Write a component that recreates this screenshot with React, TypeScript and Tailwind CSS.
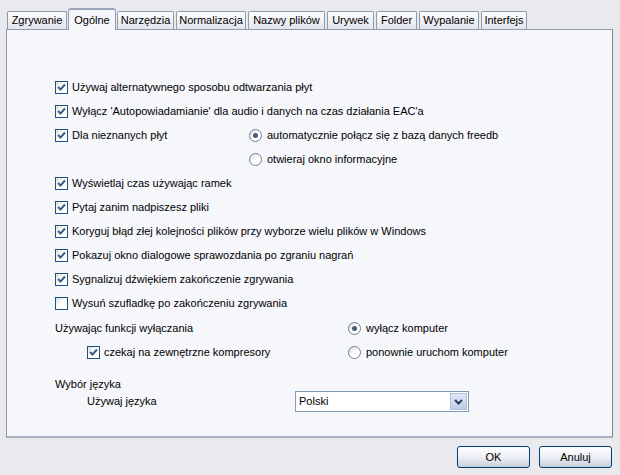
import React from 'react';

const tabs = [
  { label: 'Zgrywanie', w: 'w-[60px]' },
  { label: 'Ogólne', w: 'w-[48px]', active: true },
  { label: 'Narzędzia', w: 'w-[57px]' },
  { label: 'Normalizacja', w: 'w-[70px]' },
  { label: 'Nazwy plików', w: 'w-[77px]' },
  { label: 'Urywek', w: 'w-[47px]' },
  { label: 'Folder', w: 'w-[41px]' },
  { label: 'Wypalanie', w: 'w-[60px]' },
  { label: 'Interfejs', w: 'w-[46px]' },
];

const CheckBox = ({ checked }: { checked: boolean }) => (
  <span className="w-[13px] h-[13px] shrink-0 border border-[#1c5180] bg-gradient-to-br from-[#dcdcd7] via-white to-white flex items-center justify-center">
    {checked && (
      <svg width="9" height="9" viewBox="0 0 9 9">
        <path d="M1 4 L3.5 6.5 L8 1.5" stroke="#3d5a7e" strokeWidth="2" fill="none" />
      </svg>
    )}
  </span>
);

const Radio = ({ checked }: { checked: boolean }) => (
  <span className="w-[13px] h-[13px] shrink-0 rounded-full border border-[#6f7f96] bg-gradient-to-br from-[#d8d8de] via-white to-white flex items-center justify-center">
    {checked && <span className="w-[5px] h-[5px] rounded-full bg-[#4a5a78]" />}
  </span>
);

const Check = ({ label, checked = true }: { label: string; checked?: boolean }) => (
  <div className="flex items-center gap-[4px]">
    <CheckBox checked={checked} />
    <span>{label}</span>
  </div>
);

const Opt = ({ label, checked = false }: { label: string; checked?: boolean }) => (
  <div className="flex items-center gap-[5px]">
    <Radio checked={checked} />
    <span>{label}</span>
  </div>
);

const Row = ({ children }: { children: React.ReactNode }) => (
  <div className="h-6 flex items-center">{children}</div>
);

const Button = ({ label }: { label: string }) => (
  <button className="w-[73px] h-[22px] rounded-[3px] border border-[#003c74] bg-gradient-to-b from-white via-[#eef0f5] to-[#c6cfdc] text-black">
    {label}
  </button>
);

export default function App() {
  return (
    <div
      className="w-[620px] h-[475px] bg-[#eae9ee] text-[11px] text-black flex flex-col"
      style={{ fontFamily: '"Liberation Sans", Arial, sans-serif' }}
    >
      <div className="h-[29px] pl-[7px] flex items-end gap-[2px]">
        {tabs.map((t) =>
          t.active ? (
            <div
              key={t.label}
              className={`${t.w} -mx-[1px] h-[22px] -mb-px relative z-10 bg-[#f6f7fb] border border-b-0 border-[#8b9bb0] rounded-t-[3px] border-t-2 border-t-[#9aa6b8] flex items-center justify-center`}
            >
              {t.label}
            </div>
          ) : (
            <div
              key={t.label}
              className={`${t.w} h-[18px] bg-gradient-to-b from-white to-[#e3e4ec] border border-b-0 border-[#8b9bb0] rounded-t-[2px] flex items-center justify-center`}
            >
              {t.label}
            </div>
          )
        )}
      </div>

      <div className="ml-[6px] w-[607px] h-[409px] bg-[#f6f7fb] border border-[#8b9bb0] border-r-[#7a889c] border-b-2 border-b-[#a8b2c2] pl-[48px] pt-[45px] flex flex-col">
        <Row><Check label="Używaj alternatywnego sposobu odtwarzania płyt" /></Row>
        <Row><Check label="Wyłącz 'Autopowiadamianie' dla audio i danych na czas działania EAC'a" /></Row>
        <Row>
          <div className="w-[194px]"><Check label="Dla nieznanych płyt" /></div>
          <Opt label="automatycznie połącz się z bazą danych freedb" checked />
        </Row>
        <Row>
          <div className="w-[194px]" />
          <Opt label="otwieraj okno informacyjne" />
        </Row>
        <Row><Check label="Wyświetlaj czas używając ramek" /></Row>
        <Row><Check label="Pytaj zanim nadpiszesz pliki" /></Row>
        <Row><Check label="Koryguj błąd złej kolejności plików przy wyborze wielu plików w Windows" /></Row>
        <Row><Check label="Pokazuj okno dialogowe sprawozdania po zgraniu nagrań" /></Row>
        <Row><Check label="Sygnalizuj dźwiękiem zakończenie zgrywania" /></Row>
        <Row><Check label="Wysuń szufladkę po zakończeniu zgrywania" checked={false} /></Row>
        <div className="mt-px">
          <Row>
            <div className="w-[293px]">Używając funkcji wyłączania</div>
            <Opt label="wyłącz komputer" checked />
          </Row>
          <Row>
            <div className="w-[293px] pl-[32px]"><Check label="czekaj na zewnętrzne kompresory" /></div>
            <Opt label="ponownie uruchom komputer" />
          </Row>
        </div>
        <div className="mt-[13px] h-[14px] leading-[14px]">Wybór języka</div>
        <div className="h-[21px] flex items-center pl-[32px]">
          <div className="w-[208px]">Używaj języka</div>
          <div className="w-[174px] h-[21px] border border-[#7f9db9] bg-white flex items-center justify-between pl-[3px] pr-px">
            <span>Polski</span>
            <span className="w-[17px] h-[17px] bg-gradient-to-b from-[#dfe8f8] to-[#bccde8] border border-[#b4c4de] flex items-center justify-center">
              <svg width="9" height="6" viewBox="0 0 9 6">
                <path d="M1 1 L4.5 4.5 L8 1" stroke="#2c3e5c" strokeWidth="2" fill="none" />
              </svg>
            </span>
          </div>
        </div>
      </div>

      <div className="mt-[8px] pr-[8px] flex justify-end gap-[9px]">
        <Button label="OK" />
        <Button label="Anuluj" />
      </div>
    </div>
  );
}
